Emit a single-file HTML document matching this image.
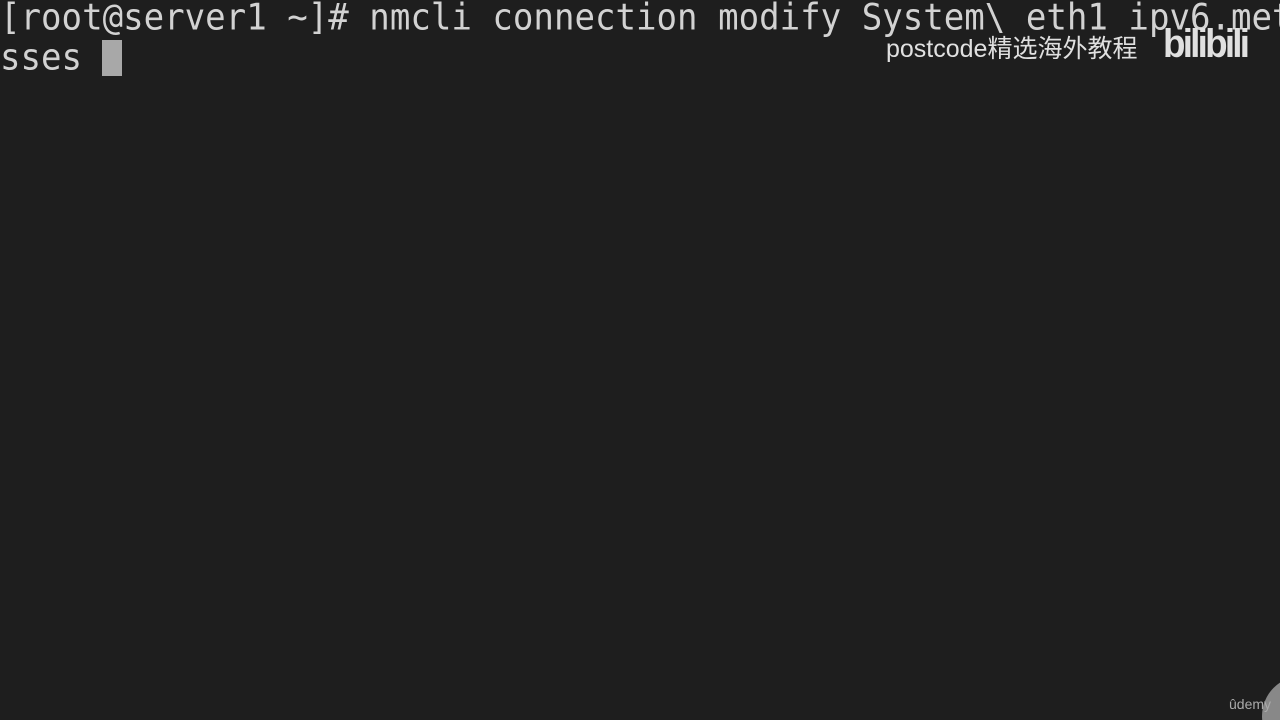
<!DOCTYPE html>
<html><head><meta charset="utf-8"><style>
html,body{margin:0;padding:0;width:1280px;height:720px;overflow:hidden;background:#1e1e1e;}
#w{position:relative;width:1280px;height:720px;overflow:hidden;}
.t{position:absolute;left:0;font-family:"DejaVu Sans Mono","Liberation Mono",monospace;font-size:34.1px;color:#d2d2d2;white-space:pre;line-height:40px;transform:scaleY(1.08);transform-origin:top left;}
.cur{position:absolute;left:102px;top:40px;width:20px;height:36px;background:#a8a8a8;}
.wm{position:absolute;left:886px;top:34px;font-family:"Liberation Sans","Noto Sans CJK SC",sans-serif;font-size:25px;color:#e0e0e0;line-height:30px;}
.bl{position:absolute;left:1163px;top:22px;font-family:"Liberation Sans",sans-serif;font-size:40px;font-weight:bold;color:#e0e0e0;letter-spacing:-3px;transform:scaleX(0.92);transform-origin:left;}
.ud{position:absolute;left:1229px;top:696px;font-family:"Liberation Sans",sans-serif;font-size:14px;color:#aaa;}
.circ{position:absolute;left:1262px;top:676px;width:80px;height:80px;border-radius:50%;background:#888;}
</style></head><body><div id="w">
<div class="t" style="top:-4px;width:1300px">[root@server1 ~]# nmcli connection modify System\ eth1 ipv6.met</div>
<div class="t" style="top:36px">sses</div>
<div class="cur"></div>
<div class="wm">postcode精选海外教程</div>
<div class="bl">bilibili</div>
<div class="circ"></div>
<div class="ud">ûdemy</div>
</div></body></html>
